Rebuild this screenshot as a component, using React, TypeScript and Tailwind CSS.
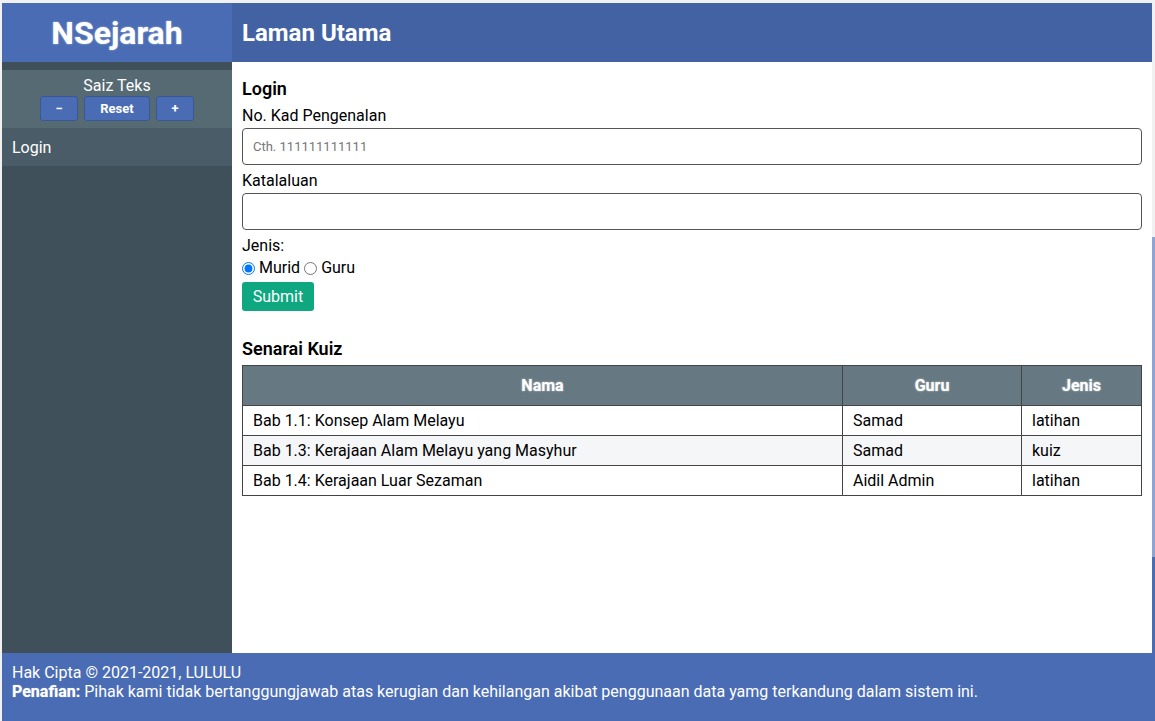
import { useState } from "react";

type Kuiz = {
  nama: string;
  guru: string;
  jenis: string;
};

const senaraiKuiz: Kuiz[] = [
  { nama: "Bab 1.1: Konsep Alam Melayu", guru: "Samad", jenis: "latihan" },
  { nama: "Bab 1.3: Kerajaan Alam Melayu yang Masyhur", guru: "Samad", jenis: "kuiz" },
  { nama: "Bab 1.4: Kerajaan Luar Sezaman", guru: "Aidil Admin", jenis: "latihan" },
];

function SaizButton({ label, width }: { label: string; width: string }) {
  return (
    <button
      className={`${width} h-[25px] rounded-[3px] border border-[#3b5896] bg-[#4a6cb4] text-[13px] font-bold text-white`}
    >
      {label}
    </button>
  );
}

export default function App() {
  const [jenis, setJenis] = useState("murid");

  return (
    <div className="flex h-[721px] w-[1155px] bg-[#f1f1f1] pl-[2px] font-[Roboto,sans-serif]">
      <div className="flex w-[1150px] flex-col pt-[3px]">
        {/* header */}
        <div className="flex h-[59px] shrink-0">
          <div className="flex w-[230px] items-center justify-center bg-[#4a6cb4] text-[32px] font-bold text-white [text-shadow:0_0_2px_rgba(255,255,255,0.6)]">
            NSejarah
          </div>
          <div className="flex flex-1 items-center bg-[#4262a4] px-[10px] text-[24px] font-bold text-white">
            Laman Utama
          </div>
        </div>

        <div className="flex flex-1">
          {/* sidebar */}
          <div className="w-[230px] bg-[#3f505a] pt-[8px]">
            <div className="flex h-[58px] flex-col items-center bg-[#566a74] pt-[6px]">
              <div className="text-[16px] leading-[19px] text-white">Saiz Teks</div>
              <div className="mt-[1px] flex gap-[6px]">
                <SaizButton label="−" width="w-[38px]" />
                <SaizButton label="Reset" width="w-[66px]" />
                <SaizButton label="+" width="w-[38px]" />
              </div>
            </div>
            <div className="flex h-[38px] items-center bg-[#4a5c67] px-[10px] pt-[1px] text-[16px] text-white">
              Login
            </div>
          </div>

          {/* content */}
          <div className="flex-1 bg-white px-[10px] pt-[15px] text-[16px] text-black">
            <h2 className="text-[18px] font-semibold leading-[24px]">Login</h2>
            <div className="mt-[3px] leading-[24px]">No. Kad Pengenalan</div>
            <input
              className="h-[37px] w-full rounded-[4px] border border-[#555] px-[10px] text-[13px] placeholder:text-[#777] outline-none"
              placeholder="Cth. 111111111111"
            />
            <div className="mt-[4px] leading-[24px]">Katalaluan</div>
            <input
              type="password"
              className="h-[37px] w-full rounded-[4px] border border-[#555] px-[10px] text-[13px] outline-none"
            />
            <div className="mt-[4px] leading-[24px]">Jenis:</div>
            <div className="flex h-[20px] items-center leading-[20px]">
              <input
                type="radio"
                name="jenis"
                className="m-0 mr-[4px] h-[13px] w-[13px]"
                checked={jenis === "murid"}
                onChange={() => setJenis("murid")}
              />
              <span>Murid</span>
              <input
                type="radio"
                name="jenis"
                className="m-0 ml-[4px] mr-[4px] h-[13px] w-[13px]"
                checked={jenis === "guru"}
                onChange={() => setJenis("guru")}
              />
              <span>Guru</span>
            </div>
            <button className="mt-[4px] h-[29px] w-[72px] rounded-[3px] bg-[#0fa77f] text-[16px] text-white">
              Submit
            </button>

            <h2 className="mt-[26px] text-[18px] font-semibold leading-[24px]">Senarai Kuiz</h2>
            <table className="mt-[4px] w-full border-collapse border border-[#444] text-[16px]">
              <thead>
                <tr className="h-[40px] bg-[#667982] font-bold text-white [text-shadow:0_0_2px_rgba(255,255,255,0.7)]">
                  <th className="w-[600px] border border-[#444]">Nama</th>
                  <th className="w-[179px] border border-[#444]">Guru</th>
                  <th className="border border-[#444]">Jenis</th>
                </tr>
              </thead>
              <tbody>
                {senaraiKuiz.map((k, i) => (
                  <tr key={k.nama} className={`h-[30px] ${i % 2 === 1 ? "bg-[#f5f6f8]" : "bg-white"}`}>
                    <td className="border border-[#444] px-[10px]">{k.nama}</td>
                    <td className="border border-[#444] px-[10px]">{k.guru}</td>
                    <td className="border border-[#444] px-[10px]">{k.jenis}</td>
                  </tr>
                ))}
              </tbody>
            </table>
          </div>
        </div>

        {/* footer */}
        <div className="h-[68px] shrink-0 bg-[#4a6cb4] px-[10px] pt-[10px] text-[16px] leading-[19px] text-white">
          <div>Hak Cipta © 2021-2021, LULULU</div>
          <div>
            <b className="[text-shadow:0_0_1px_rgba(255,255,255,0.6)]">Penafian:</b> Pihak kami tidak
            bertanggungjawab atas kerugian dan kehilangan akibat penggunaan data yamg terkandung dalam
            sistem ini.
          </div>
        </div>
      </div>

      {/* right edge strip */}
      <div className="flex w-[3px] flex-col">
        <div className="h-[237px] bg-[#f1f1f1]" />
        <div className="h-[320px] bg-[#8ea4d3]" />
        <div className="flex-1 bg-[#4a6cb4]" />
      </div>
    </div>
  );
}
